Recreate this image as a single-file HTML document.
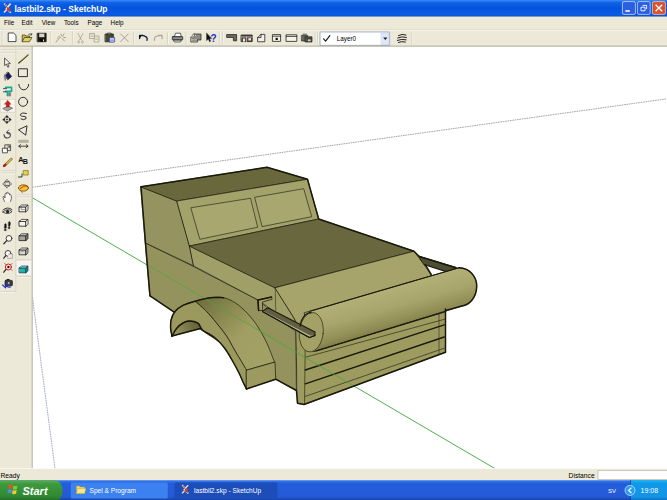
<!DOCTYPE html>
<html><head><meta charset="utf-8"><title>lastbil2.skp - SketchUp</title>
<style>
html,body{margin:0;padding:0;background:#fff;overflow:hidden}
body{width:667px;height:500px;position:relative;font-family:"Liberation Sans",sans-serif}
svg{position:absolute;left:0;top:0;display:block}
text{font-family:"Liberation Sans",sans-serif}
</style></head><body>
<svg width="667" height="500" viewBox="0 0 667 500">
<defs>
<linearGradient id="tb" x1="0" y1="0" x2="0" y2="1">
<stop offset="0" stop-color="#3f8cf3"/><stop offset="0.16" stop-color="#0f61e8"/><stop offset="0.5" stop-color="#0553dc"/><stop offset="0.9" stop-color="#0a5be6"/><stop offset="1" stop-color="#0a48c0"/>
</linearGradient>
<linearGradient id="task" x1="0" y1="0" x2="0" y2="1">
<stop offset="0" stop-color="#3c81f3"/><stop offset="0.15" stop-color="#245edb"/><stop offset="0.85" stop-color="#2459d6"/><stop offset="1" stop-color="#1941a5"/>
</linearGradient>
<linearGradient id="tray" x1="0" y1="0" x2="0" y2="1">
<stop offset="0" stop-color="#19b9f3"/><stop offset="0.15" stop-color="#1199e8"/><stop offset="0.85" stop-color="#1394e6"/><stop offset="1" stop-color="#0f6fc4"/>
</linearGradient>
<linearGradient id="start" x1="0" y1="0" x2="0" y2="1">
<stop offset="0" stop-color="#5eac56"/><stop offset="0.2" stop-color="#3c9a3c"/><stop offset="0.8" stop-color="#2f8a33"/><stop offset="1" stop-color="#276f2b"/>
</linearGradient>
<linearGradient id="cyl" gradientUnits="userSpaceOnUse" x1="380" y1="288" x2="392" y2="330">
<stop offset="0" stop-color="#b4b279"/><stop offset="0.5" stop-color="#a7a56b"/><stop offset="0.85" stop-color="#8f8d54"/><stop offset="1" stop-color="#7c7a44"/>
</linearGradient>
<linearGradient id="ftop" gradientUnits="userSpaceOnUse" x1="200" y1="298" x2="262" y2="365">
<stop offset="0" stop-color="#6e6c3e"/><stop offset="0.3" stop-color="#8a8850"/><stop offset="0.6" stop-color="#a09e62"/><stop offset="1" stop-color="#a3a165"/>
</linearGradient>
<linearGradient id="fund" gradientUnits="userSpaceOnUse" x1="175" y1="335" x2="200" y2="322">
<stop offset="0" stop-color="#9a9860"/><stop offset="1" stop-color="#5e5c32"/>
</linearGradient>
<clipPath id="vp"><rect x="32.5" y="46.5" width="634.5" height="422"/></clipPath>
</defs>
<rect x="0" y="0" width="667" height="500" fill="#ece9d8"/>
<rect id="titlebar" x="0" y="0" width="667" height="16.5" fill="url(#tb)"/>
<g id="appicon"><path d="M4.2,3.4 L8,8 L4,12.6 M10.6,3.6 L6.4,8.4 L10.8,12.8" stroke="#e8e0d0" stroke-width="1.6" fill="none"/><circle cx="8.6" cy="9.4" r="1.8" fill="#d03a30"/><path d="M5,4 L10,12" stroke="#b84030" stroke-width="1"/></g>
<text x="14.5" y="11.6" font-size="8.6" font-weight="bold" fill="#fff" textLength="93" lengthAdjust="spacingAndGlyphs">lastbil2.skp - SketchUp</text>
<g id="winbtns">
<rect x="622.4" y="1.6" width="13" height="12.8" rx="1.6" fill="#2a5fe0" stroke="#dfe8ff" stroke-width="0.7"/>
<rect x="625.4" y="10.2" width="4.4" height="1.6" fill="#fff"/>
<rect x="637.4" y="1.6" width="12.8" height="12.8" rx="1.6" fill="#2a5fe0" stroke="#dfe8ff" stroke-width="0.7"/>
<path d="M642.6,5.4 H646.6 V9 M641,7.2 H645 V10.8 H641 Z" fill="none" stroke="#fff" stroke-width="0.9"/>
<rect x="652.4" y="1.6" width="13" height="12.8" rx="1.6" fill="#d9522e" stroke="#f4d8d0" stroke-width="0.7"/>
<path d="M655.6,4.8 L662.2,11.2 M662.2,4.8 L655.6,11.2" stroke="#fff" stroke-width="1.3"/>
</g>
<g font-size="6.3" fill="#000">
<text x="4" y="25.4">File</text><text x="21.6" y="25.4">Edit</text><text x="41.7" y="25.4">View</text><text x="63.9" y="25.4">Tools</text><text x="87.6" y="25.4">Page</text><text x="110.6" y="25.4">Help</text>
</g>
<line x1="0" y1="29.8" x2="667" y2="29.8" stroke="#d0ccb8" stroke-width="0.6"/>
<line x1="0" y1="30.4" x2="667" y2="30.4" stroke="#fff" stroke-width="0.6"/>

<g id="toolbar-top" fill="none" stroke-linejoin="round" stroke-linecap="round">
<line x1="2.3" y1="32" x2="2.3" y2="44" stroke="#c5c2b2" stroke-width="0.7"/><line x1="3.0" y1="32" x2="3.0" y2="44" stroke="#fff" stroke-width="0.6"/>
<!-- new -->
<path d="M8.6,33 H13.6 L16,35.4 V41.6 H8.6 Z" fill="#fff" stroke="#222" stroke-width="0.8"/>
<!-- open -->
<path d="M22.2,41.4 V35 H25 L26,36 H29.5 V37.5" fill="#c9b84a" stroke="#3a3510" stroke-width="0.7"/>
<path d="M22.2,41.4 L24.5,37.5 H32 L29.6,41.4 Z" fill="#e0d060" stroke="#3a3510" stroke-width="0.7"/>
<path d="M28.5,34.2 Q30.3,33 31.5,34.6 M31.7,33.4 V35 H30.2" stroke="#222" stroke-width="0.6"/>
<!-- save -->
<rect x="37.4" y="33.2" width="8.8" height="8.6" fill="#1a1a14" stroke="#111" stroke-width="0.6"/>
<rect x="39.2" y="33.6" width="5.2" height="3.6" fill="#d8d6c6"/>
<rect x="39.6" y="38.8" width="4.2" height="3" fill="#0a0a0a"/>
<rect x="43" y="39.4" width="1" height="2" fill="#ddd"/>
<line x1="51" y1="32" x2="51" y2="44" stroke="#c5c2b2" stroke-width="0.7"/><line x1="51.7" y1="32" x2="51.7" y2="44" stroke="#fff" stroke-width="0.6"/>
<!-- wand grey -->
<path d="M56,42 L60.5,37 M61,34.2 L62,36 M64,34 L63,36 M65.5,37.5 L63.6,37.6 M62,38.5 L64.5,41" stroke="#a5a292" stroke-width="1"/>
<path d="M57.5,38.5 Q58.5,36 60,36" stroke="#a5a292" stroke-width="0.8"/>
<line x1="72.7" y1="32" x2="72.7" y2="44" stroke="#c5c2b2" stroke-width="0.7"/><line x1="73.4" y1="32" x2="73.4" y2="44" stroke="#fff" stroke-width="0.6"/>
<!-- cut grey -->
<path d="M78,33.5 L81.5,40 M83,33.5 L79.5,40 M78.6,41 a1,1 0 1 0 0.1,0 M82.4,41 a1,1 0 1 0 0.1,0" stroke="#a5a292" stroke-width="0.8"/>
<!-- copy grey -->
<path d="M90,33.5 H94.5 V38.5 H90 Z M94.5,36 H99 V42 H94 V38.5" stroke="#a5a292" stroke-width="0.8"/>
<path d="M91,35 H93.5 M91,36.5 H93.5 M95.5,38 H98 M95.5,39.5 H98" stroke="#a5a292" stroke-width="0.5"/>
<!-- paste -->
<rect x="105.4" y="34" width="8" height="7.8" fill="#4a4a2c" stroke="#15150c" stroke-width="0.7"/>
<rect x="107.6" y="33" width="3.6" height="1.8" fill="#888868" stroke="#15150c" stroke-width="0.5"/>
<rect x="109.6" y="37.4" width="5" height="4.6" fill="#e8ecff" stroke="#2030a0" stroke-width="0.7"/>
<path d="M110.6,39 H113.4 M110.6,40.4 H113.4" stroke="#3040c0" stroke-width="0.5"/>
<!-- delete grey -->
<path d="M120.6,34 L128.2,41.6 M128.2,34 L120.6,41.6" stroke="#a5a292" stroke-width="1"/>
<line x1="133.5" y1="32" x2="133.5" y2="44" stroke="#c5c2b2" stroke-width="0.7"/><line x1="134.2" y1="32" x2="134.2" y2="44" stroke="#fff" stroke-width="0.6"/>
<!-- undo -->
<path d="M139.6,38.6 V35.4 H143 M139.8,35.6 Q144,35 146.6,37.2 Q147.6,38.6 147,40.4" stroke="#10103c" stroke-width="1.3"/>
<path d="M139,35 H142.6 L139,39 Z" fill="#10103c" stroke="none"/>
<!-- redo grey -->
<path d="M162,38.6 V35.4 H158.6 M161.8,35.6 Q157.6,35 155,37.2 Q154,38.6 154.6,40.4" stroke="#a5a292" stroke-width="1.1"/>
<line x1="167.8" y1="32" x2="167.8" y2="44" stroke="#c5c2b2" stroke-width="0.7"/><line x1="168.5" y1="32" x2="168.5" y2="44" stroke="#fff" stroke-width="0.6"/>
<!-- print -->
<path d="M174.5,36.5 L175.5,33.2 H180.5 L181.2,36.5" fill="#fff" stroke="#222" stroke-width="0.7"/>
<rect x="172.3" y="36.5" width="10.4" height="3.6" rx="0.8" fill="#6a6a60" stroke="#1a1a1a" stroke-width="0.7"/>
<path d="M174,40.2 H181.4 L180.6,42 H174.6 Z" fill="#ddd" stroke="#222" stroke-width="0.6"/>
<path d="M173.6,38.2 H181.6" stroke="#ddd" stroke-width="0.5"/>
<line x1="186.2" y1="32" x2="186.2" y2="44" stroke="#c5c2b2" stroke-width="0.7"/><line x1="186.89999999999998" y1="32" x2="186.89999999999998" y2="44" stroke="#fff" stroke-width="0.6"/>
<!-- properties -->
<path d="M191.2,37 H197.6 V42 H191.2 Z" fill="#c9c7b5" stroke="#222" stroke-width="0.7"/>
<path d="M195.4,34 H201 V40 H197.6" fill="#8a8a80" stroke="#222" stroke-width="0.7"/>
<path d="M192.5,38.6 H196.4 M192.5,40.2 H196.4" stroke="#333" stroke-width="0.5"/>
<path d="M192,35.6 L194.4,33.4 L194.8,36.4" stroke="#222" stroke-width="0.7"/>
<!-- help -->
<path d="M206.6,33.2 V40.6 L208.3,39 L209.6,41.8 L210.7,41.2 L209.4,38.6 H211.6 Z" fill="#111" stroke="#111" stroke-width="0.4"/>
<text x="210.6" y="41.6" font-size="10" font-weight="bold" fill="#1c2ccf" stroke="none">?</text>
<line x1="219.4" y1="32" x2="219.4" y2="44" stroke="#c5c2b2" stroke-width="0.7"/><line x1="220.1" y1="32" x2="220.1" y2="44" stroke="#fff" stroke-width="0.6"/><line x1="222.4" y1="32" x2="222.4" y2="44" stroke="#c5c2b2" stroke-width="0.7"/><line x1="223.1" y1="32" x2="223.1" y2="44" stroke="#fff" stroke-width="0.6"/>
<!-- view icons -->
<path d="M227,34.6 H236.6 V40.8 H233.4 V37.4 H227 Z" fill="#6c6a60" stroke="#222" stroke-width="0.8"/>
<path d="M241.4,35 H252.2 V41.6 H241.4 Z" fill="#5a4a44" stroke="#222" stroke-width="0.8"/>
<path d="M241.4,37 H252.2 M246.5,37 V41.6" stroke="#ddd" stroke-width="0.6"/>
<rect x="243" y="38.6" width="2" height="3" fill="#ece9d8" stroke="none"/><rect x="248.4" y="38.2" width="2.6" height="2.2" fill="#ece9d8" stroke="none"/>
<path d="M257.6,41.4 V37.6 L261,34.4 H264.8 V41.4 Z M261,34.4 V37.6 H257.6" fill="#f4f2e6" stroke="#222" stroke-width="0.8"/>
<path d="M272.8,34.6 H280.6 V41.4 H272.8 Z M272.8,36.2 H280.6" fill="#f4f2e6" stroke="#222" stroke-width="0.8"/>
<rect x="275.6" y="37.8" width="2.2" height="2.2" fill="#111" stroke="none"/>
<path d="M286.4,34.8 H296.8 V41.4 H286.4 Z M286.4,36.4 H296.8" fill="#f4f2e6" stroke="#222" stroke-width="0.8"/>
<path d="M301.8,35.4 H307.6 V41 H301.8 Z" fill="#6a6860" stroke="#222" stroke-width="0.7"/>
<path d="M305.4,36.8 H312 V42 H305.4 Z" fill="#54524c" stroke="#222" stroke-width="0.7"/>
<path d="M303,34.2 H306.4 M307.6,39 H310.6" stroke="#222" stroke-width="0.7"/>
<rect x="308" y="39.4" width="2.6" height="1.8" fill="#d8d6c8" stroke="none"/>
<line x1="315.3" y1="32" x2="315.3" y2="44" stroke="#c5c2b2" stroke-width="0.7"/><line x1="316.0" y1="32" x2="316.0" y2="44" stroke="#fff" stroke-width="0.6"/><line x1="317.6" y1="32" x2="317.6" y2="44" stroke="#c5c2b2" stroke-width="0.7"/><line x1="318.3" y1="32" x2="318.3" y2="44" stroke="#fff" stroke-width="0.6"/>
<!-- combobox -->
<rect x="320.4" y="32" width="69.2" height="13.4" fill="#fff" stroke="#8a9cb8" stroke-width="0.7"/>
<path d="M323.6,38.8 L325.6,41.2 L329.8,35.6" stroke="#111" stroke-width="1.1"/>
<text x="336.8" y="41" font-size="6.3" fill="#000" stroke="none">Layer0</text>
<rect x="381.4" y="32.8" width="7.6" height="11.8" fill="#dfe6f8" stroke="#b8c6e8" stroke-width="0.5"/>
<path d="M383.2,37.6 H387.4 L385.3,40 Z" fill="#222" stroke="none"/>
<!-- layers icon -->
<path d="M398.4,35.6 Q402,33.4 406,35 M397.6,38 Q401.6,36 406.4,37.4 M397.4,40.4 Q401.6,38.6 406.2,39.8 M398.4,42.4 Q402,41 405.4,42" stroke="#222" stroke-width="1"/>
<line x1="412" y1="32" x2="412" y2="44" stroke="#c5c2b2" stroke-width="0.7"/><line x1="412.7" y1="32" x2="412.7" y2="44" stroke="#fff" stroke-width="0.6"/>
</g>
<rect x="32.5" y="46.5" width="634.5" height="422" fill="#fff"/>
<g id="scene" clip-path="url(#vp)" stroke-linejoin="round" stroke-linecap="round" fill="none">
<line x1="32.5" y1="187.2" x2="667" y2="98.8" stroke="#a59a9a" stroke-width="0.9" stroke-dasharray="0.9 1.5"/>
<line x1="32.5" y1="298" x2="55" y2="468.5" stroke="#9aa0c4" stroke-width="0.9" stroke-dasharray="0.9 1.5"/>
<line x1="31.6" y1="197.3" x2="494.8" y2="468.5" stroke="#3aa83a" stroke-width="0.9"/>
<g stroke="#1a1a0c" stroke-width="0.7">
<polygon points="419.2,256.3 456,267.5 452,273.4 422.2,264" fill="#4e4e34" stroke-width="1.2"/>
<polygon points="145.5,243 192.5,266 258,300 296,332 296.4,390.5 275.7,379.2 174.5,312.3 150,295.8" fill="#95935d"/>
<polygon points="141,186.75 177,201 189.7,246 193.75,266 145.5,243" fill="#959360"/>
<polygon points="189.7,246 275.2,287.7 294,318 300,330 258,300 193.75,266" fill="#a19f68"/>
<line x1="275.2" y1="287.7" x2="275.7" y2="310.5" stroke-width="0.5"/>
<polygon points="141,186.75 267,167.25 307.5,179.25 177,201" fill="#69683c"/>
<polygon points="177,201 307.5,179.25 318.7,219 189.7,246" fill="#a3a26b"/>
<polygon points="191.2,207.7 250.5,198.3 257.7,227.2 200.2,239.2" fill="#a8a770" stroke-width="0.6"/>
<polygon points="255,197.2 303.7,188.7 311.7,216.7 262.5,226.5" fill="#a8a770" stroke-width="0.6"/>
<polygon points="189.7,246 318.7,219 414,251.2 275.2,287.7" fill="#68673e"/>
<polygon points="275.2,287.7 414,251.2 431.2,274.5 440,300 300,330 294,318" fill="#a6a46a"/>
<!-- grille -->
<polygon points="296.2,325 445.5,300 445.5,352.2 304,404.5 297.6,403.2" fill="#9d9b5f"/>
<line x1="305.3" y1="340" x2="304.5" y2="404" stroke-width="0.6"/>
<line x1="439" y1="314" x2="439" y2="354" stroke-width="0.5"/>
<line x1="305.3" y1="357.3" x2="445.5" y2="319" stroke-width="0.6"/>
<line x1="305.3" y1="370" x2="444.2" y2="324.8" stroke-width="1.4"/>
<line x1="305.3" y1="383.8" x2="444.2" y2="337" stroke-width="1.4"/>
<line x1="305.3" y1="396.4" x2="444.2" y2="348.2" stroke-width="0.6"/>
<!-- fender -->
<path d="M172.0,336.0 C172.8,334.8 174.7,330.7 176.5,328.5 C178.3,326.3 180.9,324.2 183.0,323.0 C185.1,321.8 186.5,321.0 189.0,321.0 C191.5,321.0 195.8,321.7 198.0,323.2 C200.2,324.7 201.8,328.9 202.5,330.0 L200.5,328.5 L172,336 Z" fill="url(#fund)"/>
<path d="M195.0,301.3 C197.5,300.7 205.2,298.3 210.0,297.7 C214.8,297.1 219.2,296.8 223.5,297.7 C227.8,298.6 231.5,300.4 235.5,303.0 C239.5,305.6 243.8,309.5 247.5,313.5 C251.2,317.5 254.8,322.0 258.0,327.0 C261.2,332.0 264.4,338.0 267.0,343.5 C269.6,349.0 272.4,356.9 273.7,360.0 C275.0,363.1 274.8,361.7 275.0,362.0 L246.5,370.2 C245.5,368.5 242.5,363.4 240.5,360.0 C238.5,356.6 236.8,354.0 234.5,350.0 C232.2,346.0 229.6,340.6 226.5,336.0 C223.4,331.4 219.5,326.8 216.0,322.5 C212.5,318.2 209.0,314.0 205.5,310.5 C202.0,307.0 196.8,302.8 195.0,301.3 Z" fill="url(#ftop)"/>
<path d="M172.0,336.0 C171.8,334.7 170.7,330.8 170.6,328.0 C170.5,325.2 170.5,322.2 171.2,319.5 C171.9,316.8 173.0,313.9 175.0,311.5 C177.0,309.1 179.7,307.1 183.0,305.4 C186.3,303.7 193.0,302.0 195.0,301.3 C196.8,302.8 202.0,307.0 205.5,310.5 C209.0,314.0 212.5,318.2 216.0,322.5 C219.5,326.8 223.4,331.4 226.5,336.0 C229.6,340.6 232.2,346.0 234.5,350.0 C236.8,354.0 238.5,356.6 240.5,360.0 C242.5,363.4 245.5,368.5 246.5,370.2 L246.5,389 C246.0,388.0 244.8,385.7 243.5,383.0 C242.2,380.3 240.9,376.8 239.0,373.0 C237.1,369.2 234.4,364.2 232.0,360.0 C229.6,355.8 227.4,351.8 224.5,348.0 C221.6,344.2 218.2,340.5 214.5,337.5 C210.8,334.5 205.2,332.4 202.5,330.0 C199.8,327.6 200.2,324.7 198.0,323.2 C195.8,321.7 191.5,321.0 189.0,321.0 C186.5,321.0 185.1,321.8 183.0,323.0 C180.9,324.2 178.3,326.3 176.5,328.5 C174.7,330.7 172.8,334.8 172.0,336.0 Z" fill="#9b995e"/>
<polygon points="246.5,370.2 275,362 275.7,379.2 246.5,389" fill="#9c9a5e"/>
<!-- cylinder -->
<path d="M304.5,312.7 L459,267.7 C470,268 477,277 476.7,286.5 C476.5,297 470,305 462,306 L313.5,351.7 Z" fill="url(#cyl)"/>
<path d="M316,351 L446,311.4" stroke-width="1.3" stroke-dasharray="1.4 0.8"/>
<ellipse cx="311.2" cy="332.2" rx="12" ry="19.7" transform="rotate(6 311.2 332.2)" fill="#a3a166" stroke-width="0.6"/>
<!-- left bracket -->
<polygon points="258,300 271.5,297 272.2,299.2 262.5,302 262.5,310.5 258.7,310.5" fill="#a09e63"/>
<polygon points="267.7,307.8 315,332 315,335.4 309.4,337.4 262.5,311.4" fill="#605f42" stroke-width="1.1"/>
<polygon points="263.4,311 310.4,335.6 314.4,335.6 309.6,336.9 263,311.6" fill="#b3b18a" stroke="none"/>
</g>
<!-- green axis overlay on model -->
<line x1="148" y1="265.4" x2="353" y2="385.5" stroke="#48a83a" stroke-width="1.1" opacity="0.6"/>
<!-- profile lines -->
<g stroke="#1a1a0c" stroke-width="1.5">
<polyline points="150,295.8 145.5,243 141,186.75 267,167.25 307.5,179.25 318.7,219 414,251.2 419.2,256.5"/>
<polyline points="150,295.8 174.5,312.3"/>
<path d="M172.0,336.0 C171.8,334.7 170.7,330.8 170.6,328.0 C170.5,325.2 170.5,322.2 171.2,319.5 C171.9,316.8 173.0,313.9 175.0,311.5 C177.0,309.1 179.7,307.1 183.0,305.4 C186.3,303.7 190.5,302.6 195.0,301.3 C199.5,300.0 205.2,298.3 210.0,297.7 C214.8,297.1 221.2,297.7 223.5,297.7"/>
<path d="M172.0,336.0 C172.8,334.8 174.7,330.7 176.5,328.5 C178.3,326.3 180.9,324.2 183.0,323.0 C185.1,321.8 186.5,321.0 189.0,321.0 C191.5,321.0 195.8,321.7 198.0,323.2 C200.2,324.7 199.8,327.6 202.5,330.0 C205.2,332.4 210.8,334.5 214.5,337.5 C218.2,340.5 221.6,344.2 224.5,348.0 C227.4,351.8 229.6,355.8 232.0,360.0 C234.4,364.2 237.1,369.2 239.0,373.0 C240.9,376.8 242.2,380.3 243.5,383.0 C244.8,385.7 246.0,388.0 246.5,389.0"/>
<polyline points="172,336 200.5,328.5"/>
<polyline points="246.5,389 275.7,379.2 296.4,390.5 297.6,403.2 304,404.5 445.5,352.2 445.5,309"/>
<path d="M459,267.7 C470,268 477,277 476.7,286.5 C476.5,297 470,305 462,306 L446,310.5"/>
<polyline points="419.2,256.5 456,267.7"/>
<polyline points="431.2,274.5 425.2,264.7"/>
<polyline points="271.5,297 258,300 258.7,310.5"/>
<path d="M300.2,326 C300.6,319 305,313 311,312.4" stroke-width="1.2"/>
<polyline points="262.5,311.4 309.4,337.4 315,335.4" stroke-width="1.1"/>
<polyline points="310,311.2 459,267.7" stroke-width="1.1"/>
</g>
</g>

<line x1="0" y1="46.1" x2="667" y2="46.1" stroke="#9d9a8a" stroke-width="0.8"/>
<line x1="32.2" y1="46" x2="32.2" y2="468.5" stroke="#9d9a8a" stroke-width="0.7"/>
<line x1="15.8" y1="47" x2="15.8" y2="292" stroke="#cfccbc" stroke-width="0.6"/>

<g id="toolbar-left" fill="none" stroke-linejoin="round" stroke-linecap="round">
<line x1="1.5" y1="50" x2="14.5" y2="50" stroke="#c5c2b2" stroke-width="0.7"/><line x1="1.5" y1="50.7" x2="14.5" y2="50.7" stroke="#fff" stroke-width="0.6"/><line x1="1.5" y1="52.4" x2="14.5" y2="52.4" stroke="#c5c2b2" stroke-width="0.7"/><line x1="1.5" y1="53.1" x2="14.5" y2="53.1" stroke="#fff" stroke-width="0.6"/>
<line x1="17.5" y1="49.4" x2="30.5" y2="49.4" stroke="#c5c2b2" stroke-width="0.7"/><line x1="17.5" y1="50.1" x2="30.5" y2="50.1" stroke="#fff" stroke-width="0.6"/>
<!-- col1: select -->
<path d="M4.6,58.4 V65.6 L6.3,64.2 L7.8,67.2 L9,66.6 L7.6,63.8 L10,63.6 Z" fill="#f4f2ea" stroke="#333" stroke-width="0.8"/>
<!-- paint bucket -->
<path d="M5,75.5 L8.4,72.6 L11.6,76.4 L8,79.6 Z" fill="#1a1a60" stroke="#15153a" stroke-width="0.7"/>
<path d="M4.6,74.6 Q3.6,77.4 5.2,80.6 Q6.4,78 5.8,75.4 Z" fill="#9a98a8" stroke="#555" stroke-width="0.5"/>
<path d="M6,73 Q7.4,71.4 9,72.6" stroke="#333" stroke-width="0.7"/>
<!-- component (teal) -->
<path d="M5.6,87.4 H11.6 V91.4 H9.6 V95.6 M7.4,91.4 V95.6 M5.6,91.4 H11.6" stroke="#18a898" stroke-width="1.6"/>
<path d="M3.4,88.6 H6.6 M3.4,91.8 H6.2" stroke="#2a2a40" stroke-width="0.8"/>
<path d="M8.4,93.4 V96 M10.6,93.4 V96" stroke="#c83030" stroke-width="0.6"/>
<!-- push/pull pressed -->
<rect x="0.6" y="99.4" width="14.6" height="12.8" fill="#f8f6ee" stroke="#c8c4b4" stroke-width="0.5"/>
<path d="M3,108.4 L8,106 L12.6,108.2 L7.6,110.8 Z" fill="#a8a6a0" stroke="#444" stroke-width="0.6"/>
<path d="M7.8,100.6 L10.8,104.2 H9.2 V107 H6.4 V104.2 H4.8 Z" fill="#d41818" stroke="#8a1010" stroke-width="0.5"/>
<!-- move -->
<path d="M7,115.4 L8.6,117.4 H5.4 Z M7,123.6 L8.6,121.6 H5.4 Z M2.8,119.5 L4.8,117.9 V121.1 Z M11.2,119.5 L9.2,117.9 V121.1 Z" fill="#111" stroke="#111" stroke-width="0.4"/>
<rect x="6.3" y="118.8" width="1.4" height="1.4" fill="#111" stroke="none"/>
<!-- rotate -->
<path d="M4,134.6 Q4.4,138 7.4,138 Q10.6,137.6 10.4,134.6 Q10,132.4 7.2,132.6" stroke="#444" stroke-width="1.1"/>
<path d="M8.6,130 L6.4,132.6 L9,134.2" stroke="#444" stroke-width="0.9"/>
<!-- scale -->
<rect x="2.8" y="148.2" width="4.6" height="4.6" fill="#fff" stroke="#333" stroke-width="0.8"/>
<path d="M4.8,148.2 V144.8 H10.6 V150.6 H7.4" stroke="#333" stroke-width="0.8"/>
<path d="M6.6,149 L9.4,146.2 M7.6,146 H9.6 V148" stroke="#333" stroke-width="0.7"/>
<!-- tape -->
<path d="M4.2,165.8 L11.4,159" stroke="#5a3a20" stroke-width="2.4"/>
<path d="M6.6,163.6 L11.4,159" stroke="#d8c040" stroke-width="1.6"/>
<path d="M4,166 L5.4,164.8" stroke="#c02020" stroke-width="2.2"/>
<line x1="1.5" y1="171" x2="14.5" y2="171" stroke="#c5c2b2" stroke-width="0.7"/><line x1="1.5" y1="171.7" x2="14.5" y2="171.7" stroke="#fff" stroke-width="0.6"/><line x1="1.5" y1="173" x2="14.5" y2="173" stroke="#c5c2b2" stroke-width="0.7"/><line x1="1.5" y1="173.7" x2="14.5" y2="173.7" stroke="#fff" stroke-width="0.6"/>
<!-- orbit -->
<path d="M7.2,179.6 L8.8,181.6 H5.6 Z M7.2,187.8 L8.8,185.8 H5.6 Z M3,183.7 L5,182.1 V185.3 Z M11.4,183.7 L9.4,182.1 V185.3 Z" fill="#f4f2ea" stroke="#333" stroke-width="0.6"/>
<path d="M5,181.6 Q7.2,183 9.4,181.6 M5,185.8 Q7.2,184.4 9.4,185.8" stroke="#333" stroke-width="0.6"/>
<!-- hand -->
<path d="M4.4,201.4 L3,197.4 Q2.8,196 4.2,196.6 L5,198 V194 Q5.6,192.6 6.4,194 V192.8 Q7.2,191.6 8,192.8 V193.6 Q8.8,192.4 9.6,193.6 V195 Q10.6,194 11.2,195.4 Q12,198.4 10.6,201.4" fill="#f8f6ee" stroke="#333" stroke-width="0.7"/>
<!-- eye -->
<path d="M3,212 Q7.4,207.4 12,211.6 Q7.6,215.4 3,212 Z" fill="#f4f2ea" stroke="#222" stroke-width="0.8"/>
<circle cx="7.6" cy="211.6" r="1.7" fill="#222" stroke="none"/>
<path d="M3,210 Q7.4,206 12,209.6" stroke="#222" stroke-width="0.9"/>
<!-- feet -->
<path d="M4.8,224 Q6.2,222.6 6.4,225.4 L6.2,228 Q5.2,229 4.4,228 Z M4.6,229.2 H6.2 V230.6 H4.6 Z" fill="#111" stroke="#111" stroke-width="0.4"/>
<path d="M8.6,222 Q10.2,220.8 10.4,223.4 L10,226 Q9,227 8.4,226 Z M8.4,227.2 H10 V228.6 H8.4 Z" fill="#111" stroke="#111" stroke-width="0.4"/>
<!-- zoom -->
<circle cx="9" cy="238.4" r="2.9" fill="#faf8f2" stroke="#333" stroke-width="0.9"/>
<path d="M6.8,240.6 L3.8,243.8" stroke="#333" stroke-width="1.3"/>
<!-- zoom window -->
<circle cx="8" cy="253.4" r="2.9" fill="#faf8f2" stroke="#333" stroke-width="0.9"/>
<path d="M5.8,255.6 L3.8,258.2" stroke="#333" stroke-width="1.3"/>
<path d="M8.6,254 H12.4 V258.4 H7.6" stroke="#888" stroke-width="0.6" fill="#f0e8e4"/>
<!-- zoom extents -->
<circle cx="8.4" cy="267" r="3" fill="#f8e8e4" stroke="#c82020" stroke-width="1"/>
<circle cx="8.4" cy="267" r="1.2" fill="#401010" stroke="none"/>
<path d="M6,269.4 L3.8,272.2" stroke="#333" stroke-width="1.3"/>
<path d="M4.6,263.4 L5.8,264.6 M12.2,263.4 L11,264.6 M12.2,270.6 L11,269.4" stroke="#c82020" stroke-width="0.7"/>
<!-- previous camera -->
<rect x="5" y="280.4" width="7.4" height="5.4" rx="0.8" fill="#3a3a44" stroke="#15151c" stroke-width="0.7"/>
<rect x="6.6" y="279" width="3" height="1.6" fill="#222" stroke="none"/>
<circle cx="8.8" cy="283" r="1.5" fill="#a8b0c8" stroke="#111" stroke-width="0.4"/>
<path d="M2.6,285 L5.6,287.8 L5.8,285.4 Q7.6,287.6 10.4,287" stroke="#1830c0" stroke-width="1.1"/>
<line x1="1.5" y1="291.6" x2="14.5" y2="291.6" stroke="#c5c2b2" stroke-width="0.7"/><line x1="1.5" y1="292.3" x2="14.5" y2="292.3" stroke="#fff" stroke-width="0.6"/>
<!-- col2: line -->
<path d="M18.8,63 L28,55" stroke="#3a3410" stroke-width="1.2"/>
<path d="M20.4,61 L28,54.6" stroke="#c8b860" stroke-width="0.6"/>
<!-- rectangle -->
<rect x="18.8" y="68.8" width="8.6" height="7.8" stroke="#1c1c1c" stroke-width="0.9"/>
<!-- arc -->
<path d="M18.8,84.4 A4.95,5.4 0 0 0 28.7,84.4" stroke="#1c1c1c" stroke-width="0.9"/>
<!-- circle -->
<circle cx="23.1" cy="101.8" r="4.5" stroke="#1c1c1c" stroke-width="0.9"/>
<!-- freehand -->
<path d="M26.4,113.4 Q21.6,112 20.4,114.4 Q20,116.6 24,116.4 Q27,116.6 26,118.6 Q24,120.6 21,119" stroke="#1c1c1c" stroke-width="0.9"/>
<!-- polygon -->
<path d="M18.8,129.6 L27,125.8 L25.8,134.8 Z" stroke="#1c1c1c" stroke-width="0.9"/>
<!-- dimension -->
<rect x="18.8" y="140.2" width="9.4" height="2.2" fill="#b8b6a8" stroke="#8a8878" stroke-width="0.4"/>
<path d="M18.8,146.2 H28 M20.6,144.6 L18.8,146.2 L20.6,147.8 M26.2,144.6 L28,146.2 L26.2,147.8" stroke="#1c1c1c" stroke-width="0.8"/>
<!-- text -->
<text x="18.2" y="161.6" font-size="7.2" font-weight="bold" fill="#111" stroke="none">A</text>
<text x="22.8" y="164" font-size="7.2" font-weight="bold" fill="#111" stroke="none">B</text>
<!-- tag/axes -->
<rect x="23.6" y="170.6" width="4.6" height="4.4" fill="#e8d838" stroke="#5a5010" stroke-width="0.6"/>
<path d="M18.4,177 H22 V174" stroke="#222" stroke-width="0.9"/>
<!-- section plane -->
<ellipse cx="23.4" cy="188" rx="5" ry="3.2" fill="#e8c828" stroke="#8a3a10" stroke-width="0.8"/>
<path d="M20,188.6 Q23.6,184.6 27.8,186" stroke="#c82818" stroke-width="0.9"/>
<path d="M21,191.4 L22.4,192.6" stroke="#c82818" stroke-width="0.8"/>
<line x1="17.5" y1="195" x2="30.5" y2="195" stroke="#c5c2b2" stroke-width="0.7"/><line x1="17.5" y1="195.7" x2="30.5" y2="195.7" stroke="#fff" stroke-width="0.6"/><line x1="17.5" y1="197" x2="30.5" y2="197" stroke="#c5c2b2" stroke-width="0.7"/><line x1="17.5" y1="197.7" x2="30.5" y2="197.7" stroke="#fff" stroke-width="0.6"/>
<path d="M19.4,206.8 H26 V211.8 H19.4 Z" fill="#f0eee4" stroke="#1c1c1c" stroke-width="0.8"/><path d="M19.4,206.8 L21.6,205.0 H28 L26,206.8 Z" fill="#f0eee4" stroke="#1c1c1c" stroke-width="0.7"/><path d="M26,206.8 L28,205.0 V209.8 L26,211.8 Z" fill="#f0eee4" stroke="#1c1c1c" stroke-width="0.7"/>
<path d="M21.4,206.8 V209.6 H26" stroke="#555" stroke-width="0.5"/>
<path d="M19.4,221.2 H26 V226.2 H19.4 Z" fill="#f6f4ec" stroke="#1c1c1c" stroke-width="0.8"/><path d="M19.4,221.2 L21.6,219.39999999999998 H28 L26,221.2 Z" fill="#f6f4ec" stroke="#1c1c1c" stroke-width="0.7"/><path d="M26,221.2 L28,219.39999999999998 V224.2 L26,226.2 Z" fill="#f6f4ec" stroke="#1c1c1c" stroke-width="0.7"/>
<path d="M19.4,235.6 H26 V240.6 H19.4 Z" fill="#a8a69c" stroke="#1c1c1c" stroke-width="0.8"/><path d="M19.4,235.6 L21.6,233.79999999999998 H28 L26,235.6 Z" fill="#d8d6cc" stroke="#1c1c1c" stroke-width="0.7"/><path d="M26,235.6 L28,233.79999999999998 V238.6 L26,240.6 Z" fill="#7c7a70" stroke="#1c1c1c" stroke-width="0.7"/>
<path d="M19.4,249.8 H26 V254.8 H19.4 Z" fill="#dcdad0" stroke="#1c1c1c" stroke-width="0.8"/><path d="M19.4,249.8 L21.6,248.0 H28 L26,249.8 Z" fill="#eeece4" stroke="#1c1c1c" stroke-width="0.7"/><path d="M26,249.8 L28,248.0 V252.8 L26,254.8 Z" fill="#b8b6ac" stroke="#1c1c1c" stroke-width="0.7"/>
<path d="M21,252 L24.4,250.4" stroke="#555" stroke-width="0.5"/>
<line x1="17.5" y1="259.4" x2="30.5" y2="259.4" stroke="#c5c2b2" stroke-width="0.7"/><line x1="17.5" y1="260.09999999999997" x2="30.5" y2="260.09999999999997" stroke="#fff" stroke-width="0.6"/>
<rect x="16.4" y="260.4" width="15.2" height="15.4" fill="#f8f4f0" stroke="#d0ccc0" stroke-width="0.4"/>
<path d="M19.4,267.8 H26 V272.8 H19.4 Z" fill="#28b0b0" stroke="#0a4a4a" stroke-width="0.8"/><path d="M19.4,267.8 L21.6,266.0 H28 L26,267.8 Z" fill="#7adada" stroke="#0a4a4a" stroke-width="0.7"/><path d="M26,267.8 L28,266.0 V270.8 L26,272.8 Z" fill="#188888" stroke="#0a4a4a" stroke-width="0.7"/>
<line x1="17.5" y1="276.4" x2="30.5" y2="276.4" stroke="#c5c2b2" stroke-width="0.7"/><line x1="17.5" y1="277.09999999999997" x2="30.5" y2="277.09999999999997" stroke="#fff" stroke-width="0.6"/>
</g>
<line x1="0" y1="468.6" x2="667" y2="468.6" stroke="#fff" stroke-width="0.6"/>
<text x="0.5" y="477.9" font-size="6.7" fill="#000">Ready</text>
<text x="568.6" y="477.7" font-size="6.7" fill="#000">Distance</text>
<rect x="598" y="470.3" width="69.5" height="9.4" fill="#fff" stroke="#aca899" stroke-width="0.6"/>
<rect x="0" y="480.2" width="667" height="19.8" fill="url(#task)"/>
<rect x="630.5" y="480.2" width="36.5" height="19.8" fill="url(#tray)"/>
<line x1="630.5" y1="480.2" x2="630.5" y2="500" stroke="#0c3c9c" stroke-width="0.7"/>
<path d="M0 480.2 H56 Q62.5 482.4 62.5 490.2 Q62.5 498 58 500 H0 Z" fill="url(#start)"/>
<g id="flag" transform="translate(7.6,484.2)">
<path d="M1.2,0.8 Q3,-0.2 5,0.9 L4.4,4.6 Q2.6,3.6 0.6,4.5 Z" fill="#e8502c"/>
<path d="M5.8,1.2 Q7.6,2.2 9.8,1.2 L9.2,5 Q7.2,5.9 5.2,4.9 Z" fill="#7cc840"/>
<path d="M0.4,5.4 Q2.4,4.5 4.3,5.5 L3.7,9.2 Q1.8,8.2 -0.2,9.1 Z" fill="#4a8cf4"/>
<path d="M5.1,5.8 Q7,6.8 9.1,5.9 L8.5,9.6 Q6.4,10.5 4.5,9.5 Z" fill="#f4c830"/>
</g>
<text x="22.5" y="494.6" font-size="11" font-weight="bold" font-style="italic" fill="#fff">Start</text>
<rect x="70.8" y="482.6" width="97" height="15.9" rx="1.5" fill="#3c81f0"/>
<path d="M76.4,493.4 V486 H79.4 L80.2,487 H84.6 V493.4 Z" fill="#f0d868" stroke="#b89828" stroke-width="0.5"/>
<path d="M76.4,493.4 L77.8,488.6 H86 L84.6,493.4 Z" fill="#f8e890" stroke="#b89828" stroke-width="0.4"/>
<text x="89.5" y="492.9" font-size="6.6" fill="#fff">Spel &amp; Program</text>
<rect x="174.4" y="482.6" width="103" height="15.9" rx="1.5" fill="#1c4db9"/>
<g transform="translate(178.4,481.8) scale(0.92)"><path d="M4.2,3.4 L8,8 L4,12.6 M10.6,3.6 L6.4,8.4 L10.8,12.8" stroke="#e8e0d0" stroke-width="1.6" fill="none"/><circle cx="8.6" cy="9.4" r="1.8" fill="#d03a30"/><path d="M5,4 L10,12" stroke="#b84030" stroke-width="1"/></g>
<text x="194" y="492.9" font-size="6.6" fill="#fff">lastbil2.skp - SketchUp</text>
<text x="608" y="493" font-size="6" fill="#fff">SV</text>
<circle cx="630" cy="490.4" r="5" fill="#2a9cf0" stroke="#bfe4ff" stroke-width="0.8"/>
<path d="M631.4,487.8 L628.6,490.4 L631.4,493" stroke="#fff" stroke-width="1.2" fill="none"/>
<text x="640.6" y="493" font-size="7" fill="#fff">19:08</text>
</svg>
</body></html>
